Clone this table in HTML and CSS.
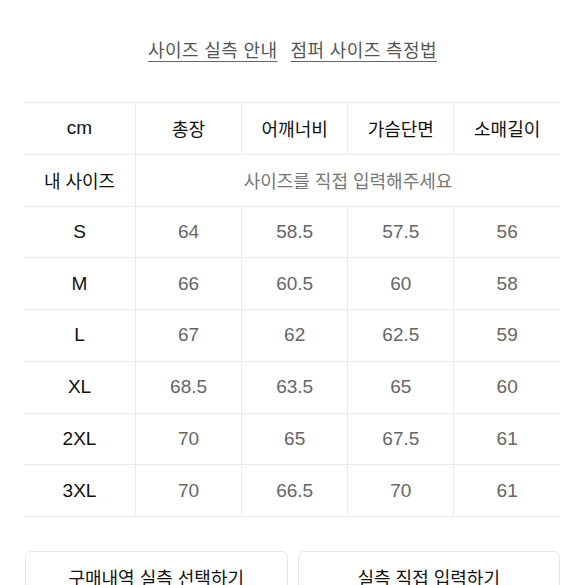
FILE: index.html
```html
<!DOCTYPE html>
<html lang="ko">
<head>
<meta charset="utf-8">
<link rel="stylesheet" href="styles.css">
</head>
<body>
<div class="page">
  <div class="links">
    <a class="link" href="#">사이즈 실측 안내</a>
    <a class="link" href="#">점퍼 사이즈 측정법</a>
  </div>
  <table class="size-table">
    <tr class="head">
      <th class="lat">cm</th><th>총장</th><th>어깨너비</th><th>가슴단면</th><th>소매길이</th>
    </tr>
    <tr>
      <th>내 사이즈</th><td colspan="4" class="mine">사이즈를 직접 입력해주세요</td>
    </tr>
    <tr><th class="lat">S</th><td>64</td><td>58.5</td><td>57.5</td><td>56</td></tr>
    <tr><th class="lat">M</th><td>66</td><td>60.5</td><td>60</td><td>58</td></tr>
    <tr><th class="lat">L</th><td>67</td><td>62</td><td>62.5</td><td>59</td></tr>
    <tr><th class="lat">XL</th><td>68.5</td><td>63.5</td><td>65</td><td>60</td></tr>
    <tr><th class="lat">2XL</th><td>70</td><td>65</td><td>67.5</td><td>61</td></tr>
    <tr><th class="lat">3XL</th><td>70</td><td>66.5</td><td>70</td><td>61</td></tr>
  </table>
  <div class="buttons">
    <button class="btn">구매내역 실측 선택하기</button>
    <button class="btn">실측 직접 입력하기</button>
  </div>
</div>
</body>
</html>
```
FILE: styles.css
```css
html, body {
  margin: 0;
  padding: 0;
  background: #fff;
}
body {
  font-family: "Liberation Sans", "Noto Sans CJK KR", sans-serif;
  color: #111;
}
.page {
  padding: 38px 25px 0 24px;
}
.links {
  display: flex;
  justify-content: center;
  gap: 13px;
  padding-left: 1px;
  height: 64px;
}
.link {
  font-size: 18px;
  line-height: 26px;
  letter-spacing: 0.4px;
  color: #555;
  text-decoration: underline;
  text-decoration-color: #666;
  text-underline-offset: 4px;
  text-decoration-thickness: 1px;
}
.size-table {
  width: 536px;
  border-collapse: collapse;
  table-layout: fixed;
  border-top: 1px solid #ebebeb;
}
.size-table th,
.size-table td {
  height: 50.75px;
  padding: 0;
  text-align: center;
  font-size: 18px;
  border-bottom: 1px solid #ebebeb;
  border-left: 1px solid #ebebeb;
}
.size-table th:first-child {
  border-left: none;
  width: 111px;
}
.size-table th {
  font-weight: 400;
  color: #111;
}
.size-table td {
  color: #666;
  font-size: 19px;
}
.size-table th.lat {
  font-size: 19px;
}
.size-table .mine {
  color: #777;
  font-size: 18px;
}
.buttons {
  display: flex;
  gap: 10px;
  margin-top: 34px;
  padding-left: 1px;
}
.btn {
  flex: 1;
  height: 56px;
  border: 1px solid #e6e6e6;
  border-radius: 6px;
  background: #fff;
  font-family: inherit;
  font-size: 18px;
  line-height: 24px;
  color: #111;
  padding: 0;
}
```
